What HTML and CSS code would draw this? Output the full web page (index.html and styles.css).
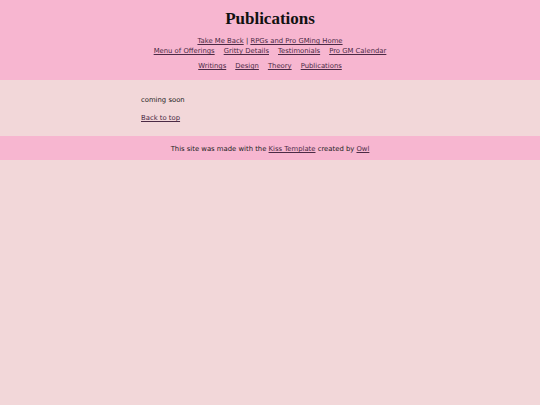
FILE: index.html
```html
<!DOCTYPE html>
<html>
<head>
<meta charset="utf-8">
<link rel="stylesheet" href="styles.css">
</head>
<body>
<header class="site-header">
  <h1 class="title">Publications</h1>
  <nav class="nav">
    <div class="nav-row"><a href="#">Take Me Back</a> | <a href="#">RPGs and Pro GMing Home</a></div>
    <div class="nav-row spaced"><a href="#">Menu of Offerings</a><a href="#">Gritty Details</a><a href="#">Testimonials</a><a href="#">Pro GM Calendar</a></div>
    <div class="nav-row spaced second"><a href="#">Writings</a><a href="#">Design</a><a href="#">Theory</a><a href="#">Publications</a></div>
  </nav>
</header>
<main class="content">
  <p class="para">coming soon</p>
  <p class="para"><a href="#">Back to top</a></p>
</main>
<footer class="site-footer">
  This site was made with the <a href="#">Kiss Template</a> created by <a href="#">Owl</a>
</footer>
</body>
</html>
```
FILE: styles.css
```css
html { background: #f2d7d9; }
body {
  margin: 0;
  font-family: "DejaVu Sans", sans-serif;
  font-size: 6.85px;
  color: #222;
  background: #f2d7d9;
}
a { color: #4b2a45; }
.site-header {
  background: #f7b6d0;
  text-align: center;
  height: 80px;
  box-sizing: border-box;
  padding-top: 9px;
}
.title {
  font-family: "Liberation Serif", serif;
  font-size: 17px;
  font-weight: bold;
  color: #111;
  margin: 0 0 7px;
  line-height: 20px;
}
.nav-row { line-height: 10px; height: 10px; }
.nav-row.spaced a { margin: 0 4.5px; }
.nav-row.second { margin-top: 5px; }
.content {
  width: 258px;
  margin: 0 auto;
  padding: 15px 0 13px;
  box-sizing: border-box;
  height: 56px;
}
.para { margin: 0 0 8px; line-height: 10px; }
.site-footer {
  background: #f7b6d0;
  text-align: center;
  height: 24px;
  line-height: 24px;
  padding-top: 1px;
  box-sizing: border-box;
}
```
